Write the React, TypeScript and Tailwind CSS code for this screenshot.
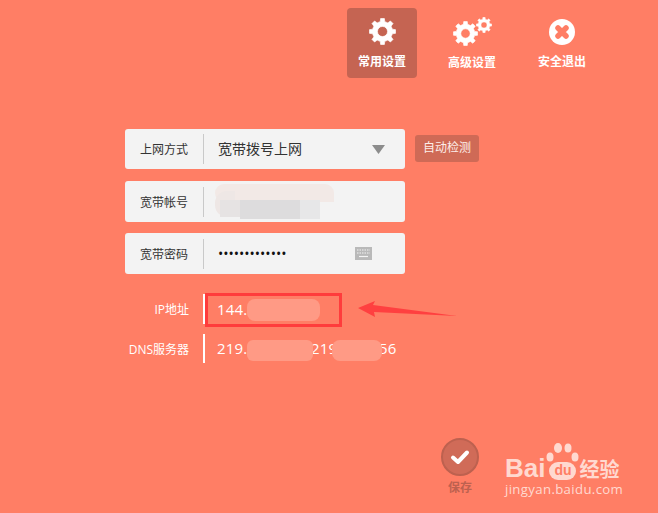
import React from 'react';

const CJK = { fontFamily: '"Open Sans", "Noto Sans CJK SC", sans-serif' };

// builds a cog outline, the hole is cut with evenodd
const gearPath = (c: number, outer: number, inner: number, hole: number, teeth: number) => {
  const pts: string[] = [];
  const step = (Math.PI * 2) / teeth;
  for (let i = 0; i < teeth; i++) {
    const a = i * step - Math.PI / 2;
    const w = step * 0.2;
    const list: [number, number][] = [
      [inner, a - w * 1.45],
      [outer, a - w * 0.9],
      [outer, a + w * 0.9],
      [inner, a + w * 1.45],
    ];
    list.forEach(([r, t]) => pts.push(`${(c + r * Math.cos(t)).toFixed(2)} ${(c + r * Math.sin(t)).toFixed(2)}`));
  }
  return `M${pts.join('L')}Z M${c - hole} ${c}a${hole} ${hole} 0 1 0 ${hole * 2} 0a${hole} ${hole} 0 1 0 ${-hole * 2} 0Z`;
};

const Gear = ({ size }: { size: number }) => (
  <svg width={size} height={size} viewBox="0 0 40 40" className="block">
    <path d={gearPath(20, 19.5, 15, 7.5, 8)} fill="#fff" fillRule="evenodd" stroke="#fff" strokeWidth="1" strokeLinejoin="round" />
  </svg>
);

const NavItem = ({ label, active, icon }: { label: string; active?: boolean; icon: React.ReactNode }) => (
  <div className={`w-[70px] h-[70px] rounded-[4px] flex flex-col items-center ${active ? 'bg-[#c56452]' : ''}`}>
    <div className="h-[37px] w-full flex items-end justify-center">{icon}</div>
    <div className="mt-[8px] text-[12px] leading-[18px] font-bold text-white">{label}</div>
  </div>
);

const FieldRow = ({ label, h, children }: { label: string; h: string; children: React.ReactNode }) => (
  <div className={`relative w-[280px] ${h} rounded-[3px] bg-[#f3f3f3] flex items-center`}>
    <div className="w-[63px] pt-[2px] text-right text-[12px] text-[#333]">{label}</div>
    <div className="ml-[15px] w-px h-[30px] bg-[#c9c9c9]" />
    <div className="flex-1 pl-[14px] flex items-center">{children}</div>
  </div>
);

const InfoRow = ({ label, h, children }: { label: string; h: string; children: React.ReactNode }) => (
  <div className={`flex items-center ${h}`}>
    <div className="w-[64px] pt-[2px] text-right text-[12px] text-white">{label}</div>
    <div className="ml-[14px] w-[2px] h-full bg-white" />
    <div className="ml-[12px] flex text-[15px] text-white tracking-[0.2px]">{children}</div>
  </div>
);

const Patch = ({ className }: { className: string }) => <div className={`absolute ${className}`} />;

export default function App() {
  return (
    <div className="relative w-[658px] h-[513px] overflow-hidden bg-[#ff7e65]" style={CJK}>
      {/* top nav */}
      <div className="pt-[8px] pl-[347px] flex gap-[20px]">
        <NavItem label="常用设置" active icon={<Gear size={27} />} />
        <div className="w-[70px] h-[70px] flex flex-col items-center">
          <div className="flex items-start h-[39px] pt-[6px] pl-[1px]">
            <div className="mt-[7px]"><Gear size={25} /></div>
            <div className="mt-[3px] ml-[-2px]"><Gear size={16} /></div>
          </div>
          <div className="mt-[7px] text-[12px] leading-[18px] font-bold text-white">高级设置</div>
        </div>
        <NavItem
          label="安全退出"
          icon={
            <svg width="26" height="26" viewBox="0 0 26 26" className="block">
              <circle cx="13" cy="13" r="13" fill="#fff" />
              <path d="M9 9L17 17M17 9L9 17" stroke="#ff7e65" strokeWidth="5.5" strokeLinecap="round" />
            </svg>
          }
        />
      </div>

      {/* form */}
      <div className="mt-[51px] ml-[125px] flex flex-col">
        <div className="flex items-start">
          <FieldRow label="上网方式" h="h-[40px]">
            <span className="-mt-[1px] text-[14px] text-[#333]">宽带拨号上网</span>
            <svg width="13" height="9" viewBox="0 0 13 9" className="ml-[70px]">
              <path d="M0 0H13L6.5 9Z" fill="#8c8c8c" />
            </svg>
          </FieldRow>
          <div className="mt-[6px] ml-[10px] w-[64px] h-[27px] rounded-[3px] bg-[#cf6a56] text-[12px] leading-[26px] text-center text-[#fdeee9]">自动检测</div>
        </div>
        <div className="mt-[12px]">
          <FieldRow label="宽带帐号" h="h-[41px]">
            <Patch className="left-[90px] top-[3px] w-[119px] h-[18px] rounded-l-[12px] rounded-tr-[12px] bg-[#f2e9e6]" />
            <Patch className="left-[90px] top-[10px] w-[20px] h-[26px] rounded-l-[12px] bg-[#eee7e5]" />
            <Patch className="left-[95px] top-[19px] w-[20px] h-[17px] bg-[#e6e3e3]" />
            <Patch className="left-[115px] top-[19px] w-[60px] h-[19px] bg-[#dddcdd]" />
            <Patch className="left-[175px] top-[19px] w-[20px] h-[19px] bg-[#e7e7e8]" />
          </FieldRow>
        </div>
        <div className="mt-[11px]">
          <FieldRow label="宽带密码" h="h-[41px]">
            <span className="w-[136px] text-[14px] leading-none text-[#111]">•••••••••••••</span>
            <svg width="17" height="13" viewBox="0 0 17 13" className="ml-[1px]">
              <rect width="17" height="13" fill="#b9b9b9" />
              <path d="M2 3H15M2 6H15" stroke="#f3f3f3" strokeWidth="1" strokeDasharray="1.5 1" />
              <path d="M4 9.5H13" stroke="#f3f3f3" strokeWidth="1.2" />
            </svg>
          </FieldRow>
        </div>
        <div className="mt-[20px] flex flex-col gap-[10px]">
          <InfoRow label="IP地址" h="h-[30px]">
            <span>144.1</span>
          </InfoRow>
          <InfoRow label="DNS服务器" h="h-[29px]">
            <span className="w-[94px]">219.1</span>
            <span className="w-[68px]">219.1</span>
            <span>56</span>
          </InfoRow>
        </div>
      </div>

      {/* mosaics over the addresses */}
      <Patch className="left-[247px] top-[299px] w-[73px] h-[22px] rounded-[8px] bg-[#ff9a85]" />
      <Patch className="left-[247px] top-[340px] w-[66px] h-[21px] rounded-[6px] bg-[#ff9a85]" />
      <Patch className="left-[332px] top-[340px] w-[50px] h-[21px] rounded-[8px] bg-[#ff9a85]" />

      {/* annotation */}
      <div className="absolute left-[205px] top-[293px] w-[137px] h-[34px] border-[3px] border-[#ff3c3c]" />
      <svg className="absolute left-[356px] top-[299px]" width="104" height="20" viewBox="0 0 104 20">
        <path d="M2 9L19 2L17 6L101 17L18 13L19 18Z" fill="#ff4040" />
      </svg>

      {/* save */}
      <div className="absolute left-[425px] top-[438px] w-[70px] flex flex-col items-center">
        <div className="w-[38px] h-[38px] rounded-full bg-[#d06b58] border-[2px] border-[#bd614f] flex items-center justify-center">
          <svg width="20" height="16" viewBox="0 0 20 16">
            <path d="M3 8.5L8 13L17 3.5" fill="none" stroke="#fff" strokeWidth="4" strokeLinecap="round" strokeLinejoin="round" />
          </svg>
        </div>
        <div className="mt-[3px] text-[12px] font-bold text-[#bd614f]">保存</div>
      </div>

      {/* watermark */}
      <div className="absolute left-[505px] top-[443px] w-[150px] text-[#ffd9d0]">
        <div className="h-[38px] pb-[3px] flex items-end relative">
          <span className="text-[26px] leading-[19px] font-bold" style={{ fontFamily: '"Liberation Sans", sans-serif' }}>Bai</span>
          <span className="ml-[4px] -mb-[2px] w-[27px] h-[18px] rounded-[9px] bg-[#ffd9d0] text-[#ff7e65] text-[14px] leading-[17px] font-bold text-center" style={{ fontFamily: '"Liberation Sans", sans-serif' }}>du</span>
          <span className="ml-[3px] -mb-[2px] text-[20px] leading-[20px] font-bold">经验</span>
          <svg className="absolute left-[40px] top-0" width="34" height="20" viewBox="0 0 34 20">
            <ellipse cx="5" cy="14" rx="3.5" ry="4.5" fill="#ffd9d0" />
            <ellipse cx="13" cy="5" rx="4" ry="5" fill="#ffd9d0" />
            <ellipse cx="23" cy="5" rx="3.5" ry="4.5" fill="#ffd9d0" />
            <ellipse cx="30" cy="14" rx="3.5" ry="4.5" fill="#ffd9d0" />
          </svg>
        </div>
        <div className="text-[13.2px] leading-[16px] tracking-[0.35px]">jingyan.baidu.com</div>
      </div>
    </div>
  );
}
